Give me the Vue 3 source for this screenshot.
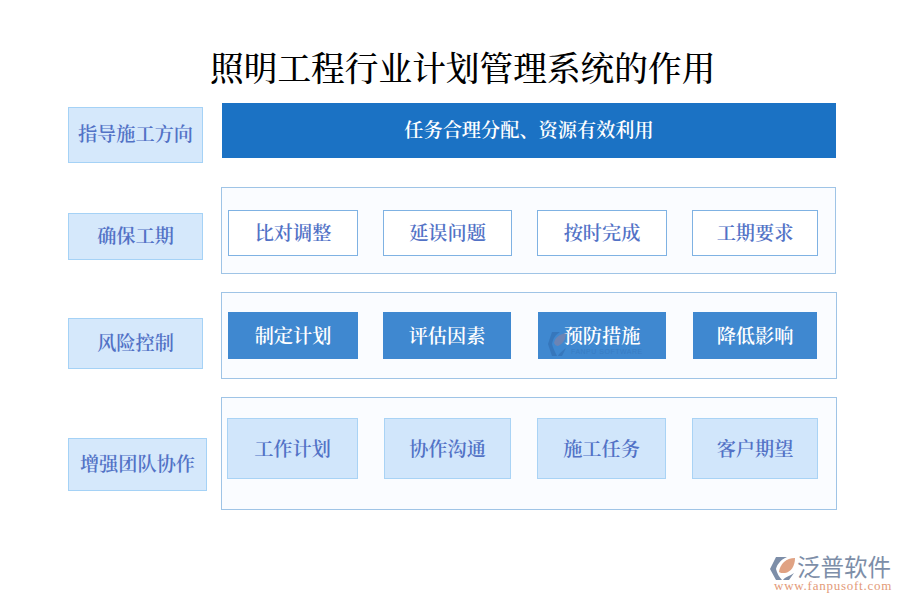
<script setup>
const rows = [
  { id: 'r2', label: '确保工期', kind: 'outline', items: ['比对调整', '延误问题', '按时完成', '工期要求'] },
  { id: 'r3', label: '风险控制', kind: 'solid', items: ['制定计划', '评估因素', '预防措施', '降低影响'] },
  { id: 'r4', label: '增强团队协作', kind: 'soft', items: ['工作计划', '协作沟通', '施工任务', '客户期望'] },
]
</script>

<template>
  <main class="page">
    <h1 class="title">照明工程行业计划管理系统的作用</h1>
    <section class="row r1">
      <div class="label">指导施工方向</div>
      <div class="banner">任务合理分配、资源有效利用</div>
    </section>
    <section v-for="row in rows" :key="row.id" class="row" :class="row.id">
      <div class="label">{{ row.label }}</div>
      <div class="panel">
        <div v-for="item in row.items" :key="item" class="chip" :class="row.kind">{{ item }}</div>
      </div>
    </section>

    <div class="watermark" aria-hidden="true">
      <svg viewBox="0 0 18 24" width="18" height="24">
        <path d="M4 0H12C7 3 5 7 4 12 5 16 7 20 9 24H4L0 12Z" fill="#2a5f9f" />
        <path d="M6 11C7 5 12 2 18 1 18 7 15 12 10 14 8 14 7 13 6 11Z" fill="#b0808c" />
        <path d="M10 24C11 21 15 19 18 16L14 24Z" fill="#2a5f9f" />
      </svg>
      <span>FANPU SOFTWARE</span>
    </div>

    <footer class="logo">
      <svg class="mark" viewBox="0 0 26 24" width="26" height="24" aria-hidden="true">
        <path d="M6 0H17C10 3 7 8 6 12 7 16 9 20 12 23H6L0 12Z" fill="#7d8ea8" />
        <path d="M9 15C10 7 16 1 25 1 25 9 21 15 15 16 12 16 10 16 9 15Z" fill="#e0a283" />
        <path d="M13 23C15 20 20 19 24 16L19 23Z" fill="#7d8ea8" />
      </svg>
      <div class="brand">
        <div class="cn">泛普软件</div>
        <div class="url">www.fanpusoft.com</div>
      </div>
    </footer>
  </main>
</template>

<style scoped>
.page {
  position: relative;
  width: 900px;
  height: 600px;
  overflow: hidden;
  background: #fff;
  box-sizing: border-box;
  padding: 47px 63px 0 68px;
  font-family: "Noto Serif CJK SC", "Liberation Serif", "Noto Sans CJK SC", serif;
}
.title {
  margin: 0 0 16px;
  height: 40px;
  padding-left: 142px;
  font-size: 33.7px;
  line-height: 40px;
  font-weight: 500;
  color: #000;
  white-space: nowrap;
}
.row {
  display: flex;
  align-items: flex-start;
}
.r1 { margin-bottom: 24px; }
.r2, .r3 { margin-bottom: 18px; }

.label {
  box-sizing: border-box;
  flex: none;
  width: 135px;
  margin-right: 18px;
  padding-bottom: 5px;
  display: flex;
  align-items: center;
  justify-content: center;
  background: #d5e8fb;
  border: 1px solid #a5d2f6;
  color: #5272c6;
  font-size: 19.2px;
  font-weight: 600;
  white-space: nowrap;
}
.r1 .label { height: 56px; margin-top: 4px; margin-right: 19px; }
.r2 .label { height: 47px; margin-top: 26px; }
.r3 .label { height: 51px; margin-top: 26px; }
.r4 .label { width: 139px; height: 53px; margin-top: 41px; margin-right: 14px; }

.banner {
  width: 614px;
  height: 55px;
  display: flex;
  align-items: center;
  justify-content: center;
  padding-bottom: 4px;
  box-sizing: border-box;
  background: #1b72c4;
  color: #fff;
  font-size: 19.2px;
  font-weight: 600;
}
.panel {
  box-sizing: border-box;
  width: 615px;
  display: grid;
  border: 1px solid #9fc4e6;
  background: #fafcff;
  height: 87px;
  align-content: start;
}
.r3 .panel, .r4 .panel { width: 616px; }
.r2 .panel {
  padding: 22px 0 0 6px;
  grid-template-columns: 130px 129px 130px 126px;
  column-gap: 25px;
}
.r3 .panel {
  padding: 19px 0 0 6px;
  grid-template-columns: 130px 128px 130px 126px;
  column-gap: 25px;
}
.r3 .chip:nth-child(n + 3) { margin-left: 2px; }
.r4 .panel {
  height: 113px;
  padding: 20px 0 0 5px;
  grid-template-columns: 131px 127px 129px 126px;
  column-gap: 26px;
}

.chip {
  box-sizing: border-box;
  display: flex;
  align-items: center;
  justify-content: center;
  font-size: 19.2px;
  font-weight: 600;
  white-space: nowrap;
  padding-bottom: 3px;
}
.outline {
  height: 46px;
  background: #fff;
  border: 1px solid #7fb2e3;
  color: #5272c6;
}
.solid {
  height: 47px;
  background: #3f88d0;
  color: #fff;
}
.soft {
  height: 61px;
  background: #d1e6fb;
  border: 1px solid #a9d3f5;
  color: #5272c6;
}
.watermark {
  position: absolute;
  left: 548px;
  top: 332px;
  display: flex;
  align-items: flex-end;
  gap: 5px;
  opacity: 0.4;
  pointer-events: none;
}
.watermark span {
  font-family: "Liberation Sans", sans-serif;
  font-size: 7px;
  line-height: 8px;
  letter-spacing: 0.5px;
  color: #2f6cb0;
  white-space: nowrap;
}

.logo {
  position: absolute;
  left: 770px;
  top: 553px;
  display: flex;
  align-items: flex-start;
}
.mark { margin-top: 4px; flex: none; }
.brand { margin-left: -24px; }
.cn {
  margin-left: 25px;
  font-family: "Noto Sans CJK SC", sans-serif;
  font-size: 23.5px;
  line-height: 26px;
  letter-spacing: 0;
  color: #7d8ea8;
  white-space: nowrap;
}
.url {
  margin-left: 2px;
  font-family: "Liberation Serif", serif;
  font-size: 13px;
  line-height: 13px;
  letter-spacing: 0.75px;
  color: #e39a78;
  white-space: nowrap;
}
</style>
